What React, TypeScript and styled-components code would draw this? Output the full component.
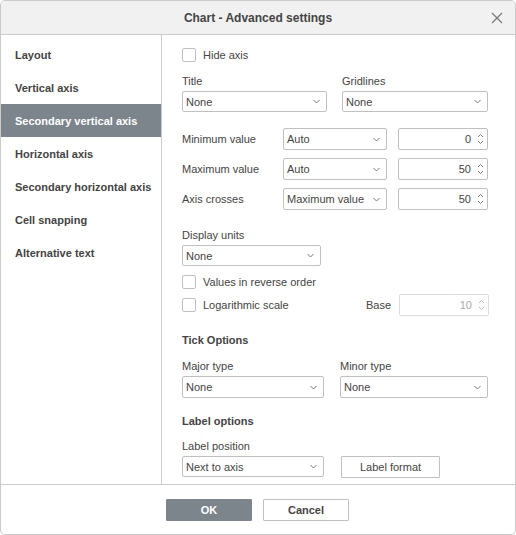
import React from "react";
import styled, { createGlobalStyle } from "styled-components";

const G = createGlobalStyle`
  body { margin: 0; background: #fff; font-family: "Liberation Sans", Arial, sans-serif; font-size: 11px; color: #444; }
`;
const Win = styled.div`
  width: 514px; height: 533px; border: 1px solid #cbcbcb; border-radius: 5px; overflow: hidden;
  display: flex; flex-direction: column;
`;
const Header = styled.div`
  height: 34px; flex: none; background: #f1f1f1; border-bottom: 1px solid #cbcbcb; box-sizing: border-box;
  display: flex; align-items: center; justify-content: center; position: relative;
  font-size: 12px; font-weight: bold; color: #444;
`;
const Close = styled.svg`position: absolute; right: 12px; top: 11px;`;
const Body = styled.div`flex: 1; display: flex; min-height: 0;`;
const Side = styled.div`
  width: 160px; flex: none; border-right: 1px solid #cbcbcb; padding-top: 3px;
`;
const Item = styled.div<{ $sel?: boolean }>`
  height: 33px; display: flex; align-items: center; padding-left: 14px; font-weight: bold; font-size: 11px;
  background: ${p => (p.$sel ? "#7d858c" : "transparent")}; color: ${p => (p.$sel ? "#fff" : "#444")};
`;
const Content = styled.div`flex: 1; padding: 13px 0 0 20px; display: flex; flex-direction: column;`;
const Check = styled.label<{ $mt?: number }>`
  display: flex; align-items: center; gap: 7px; height: 14px; margin-top: ${p => p.$mt ?? 0}px;
  &::before { content: ""; width: 12px; height: 12px; border: 1px solid #c0c0c0; border-radius: 2px; }
`;
const Label = styled.div`height: 14px; line-height: 14px;`;
const Sel = styled.div<{ $w: number; $h?: number }>`
  width: ${p => p.$w}px; height: ${p => p.$h ?? 21}px; box-sizing: border-box; border: 1px solid #c0c0c0; border-radius: 2px;
  display: flex; align-items: center; justify-content: space-between; padding: 0 6px 0 3px; background: #fff; flex: none;
`;
const Num = styled.div<{ $dis?: boolean }>`
  width: 90px; height: 22px; box-sizing: border-box; border: 1px solid ${p => (p.$dis ? "#dcdcdc" : "#c0c0c0")}; border-radius: 2px;
  display: flex; align-items: center; justify-content: flex-end; gap: 6px; padding-right: 3px; flex: none;
  color: ${p => (p.$dis ? "#aaa" : "#444")};
`;
const Pair = styled.div<{ $mt: number; $gap: number }>`
  display: flex; gap: ${p => p.$gap}px; margin-top: ${p => p.$mt}px;
`;
const Col = styled.div`display: flex; flex-direction: column; gap: 3px;`;
const Row = styled.div<{ $mt: number }>`
  display: flex; align-items: center; margin-top: ${p => p.$mt}px; height: 22px;
`;
const RowLabel = styled.div`width: 101px;`;
const Head = styled.div<{ $mt: number }>`font-weight: bold; font-size: 11px; margin-top: ${p => p.$mt}px; height: 14px;`;
const Btn = styled.div<{ $primary?: boolean; $w: number }>`
  width: ${p => p.$w}px; height: 22px; box-sizing: border-box; display: flex; align-items: center; justify-content: center;
  border: 1px solid ${p => (p.$primary ? "#7d858c" : "#c0c0c0")}; border-radius: 1px;
  background: ${p => (p.$primary ? "#7d858c" : "#fff")}; color: ${p => (p.$primary ? "#fff" : "#444")};
`;
const Footer = styled.div`
  height: 49px; flex: none; border-top: 1px solid #cbcbcb; display: flex; align-items: center; justify-content: center; gap: 11px;
  padding-right: 1px; font-weight: bold;
`;

const Chev = () => (
  <svg width="7" height="5" viewBox="0 0 7 5"><path d="M0.5 1l3 3 3-3" fill="none" stroke="#777" /></svg>
);
const Spin = ({ c = "#777" }: { c?: string }) => (
  <svg width="7" height="12" viewBox="0 0 7 12"><path d="M1 4l2.5-2.5L6 4M1 8l2.5 2.5L6 8" fill="none" stroke={c} /></svg>
);
const Select = ({ w, v, h }: { w: number; v: string; h?: number }) => (
  <Sel $w={w} $h={h}><span>{v}</span><Chev /></Sel>
);

export default function App() {
  return (
    <Win>
      <G />
      <Header>
        Chart - Advanced settings
        <Close width="12" height="12" viewBox="0 0 12 12"><path d="M1 1l10 10M11 1L1 11" stroke="#777" strokeWidth="1.2" /></Close>
      </Header>
      <Body>
        <Side>
          <Item>Layout</Item>
          <Item>Vertical axis</Item>
          <Item $sel>Secondary vertical axis</Item>
          <Item>Horizontal axis</Item>
          <Item>Secondary horizontal axis</Item>
          <Item>Cell snapping</Item>
          <Item>Alternative text</Item>
        </Side>
        <Content>
          <Check>Hide axis</Check>
          <Pair $mt={12} $gap={15}>
            <Col><Label>Title</Label><Select w={145} v="None" /></Col>
            <Col><Label>Gridlines</Label><Select w={146} v="None" /></Col>
          </Pair>
          <Row $mt={16}><RowLabel>Minimum value</RowLabel><Select w={104} h={22} v="Auto" /><span style={{ width: 11 }} /><Num>0<Spin /></Num></Row>
          <Row $mt={8}><RowLabel>Maximum value</RowLabel><Select w={104} h={22} v="Auto" /><span style={{ width: 11 }} /><Num>50<Spin /></Num></Row>
          <Row $mt={8}><RowLabel>Axis crosses</RowLabel><Select w={104} h={22} v="Maximum value" /><span style={{ width: 11 }} /><Num>50<Spin /></Num></Row>
          <Col style={{ marginTop: 18 }}><Label>Display units</Label><Select w={139} v="None" /></Col>
          <Check $mt={9}>Values in reverse order</Check>
          <Row $mt={5}>
            <Check style={{ width: 184 }}>Logarithmic scale</Check>
            <span style={{ width: 33 }}>Base</span>
            <Num $dis>10<Spin c="#bbb" /></Num>
          </Row>
          <Head $mt={18}>Tick Options</Head>
          <Pair $mt={11} $gap={16}>
            <Col><Label>Major type</Label><Select w={142} h={22} v="None" /></Col>
            <Col><Label>Minor type</Label><Select w={148} h={22} v="None" /></Col>
          </Pair>
          <Head $mt={17}>Label options</Head>
          <Pair $mt={10} $gap={17}>
            <Col><Label>Label position</Label><Select w={142} v="Next to axis" /></Col>
            <Col><Label /><Btn $w={99}>Label format</Btn></Col>
          </Pair>
        </Content>
      </Body>
      <Footer>
        <Btn $primary $w={86}>OK</Btn>
        <Btn $w={86}>Cancel</Btn>
      </Footer>
    </Win>
  );
}
